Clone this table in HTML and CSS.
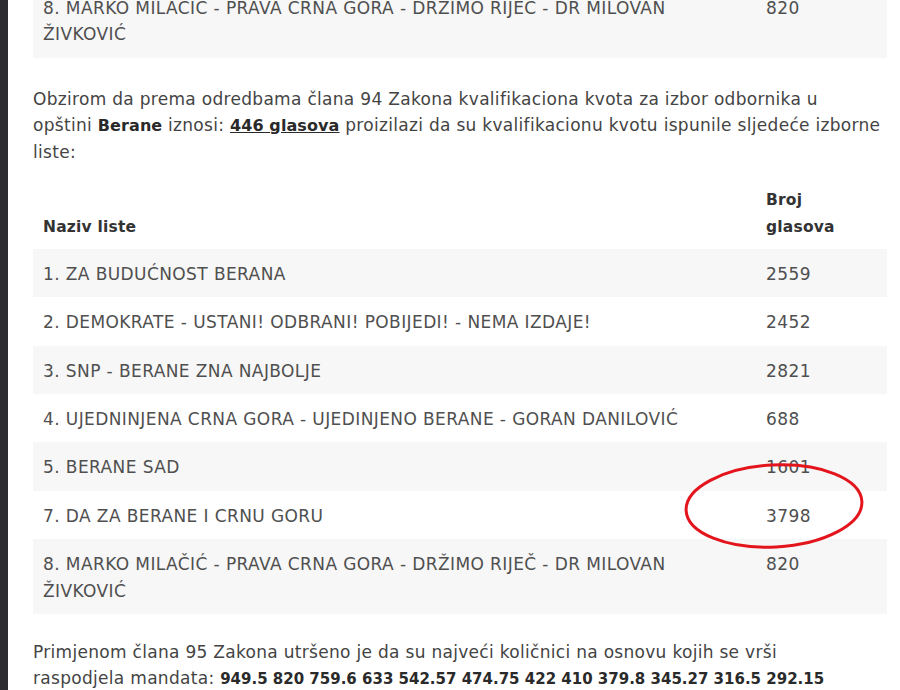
FILE: index.html
```html
<!DOCTYPE html>
<html lang="sr">
<head>
<meta charset="utf-8">
<title>Berane</title>
<link rel="stylesheet" href="styles.css">
</head>
<body>
<div class="page">
  <div class="sidebar"></div>
  <main class="content">
    <table class="results results-top">
      <colgroup><col class="col-name"><col class="col-votes"></colgroup>
      <tbody>
        <tr class="striped"><td>8. MARKO MILAČIĆ - PRAVA CRNA GORA - DRŽIMO RIJEČ - DR MILOVAN ŽIVKOVIĆ</td><td>820</td></tr>
      </tbody>
    </table>

    <p class="para">Obzirom da prema odredbama člana 94 Zakona kvalifikaciona kvota za izbor odbornika u opštini&nbsp;<strong>Berane</strong> iznosi: <strong class="under">446 glasova</strong> proizilazi da su kvalifikacionu kvotu ispunile sljedeće izborne liste:</p>

    <div class="table-wrap">
      <table class="results">
        <colgroup><col class="col-name"><col class="col-votes"></colgroup>
        <thead>
          <tr><th>Naziv liste</th><th>Broj<br>glasova</th></tr>
        </thead>
        <tbody>
          <tr class="striped"><td>1. ZA BUDUĆNOST BERANA</td><td>2559</td></tr>
          <tr><td>2. DEMOKRATE - USTANI! ODBRANI! POBIJEDI! - NEMA IZDAJE!</td><td>2452</td></tr>
          <tr class="striped"><td>3. SNP - BERANE ZNA NAJBOLJE</td><td>2821</td></tr>
          <tr><td>4. UJEDNINJENA CRNA GORA - UJEDINJENO BERANE - GORAN DANILOVIĆ</td><td>688</td></tr>
          <tr class="striped"><td>5. BERANE SAD</td><td>1601</td></tr>
          <tr><td>7. DA ZA BERANE I CRNU GORU</td><td>3798</td></tr>
          <tr class="striped"><td>8. MARKO MILAČIĆ - PRAVA CRNA GORA - DRŽIMO RIJEČ - DR MILOVAN ŽIVKOVIĆ</td><td>820</td></tr>
        </tbody>
      </table>
      <svg class="circle" width="190" height="100" viewBox="0 0 190 100" aria-hidden="true">
        <ellipse cx="95" cy="50" rx="88" ry="41" transform="rotate(-3 95 50)" fill="none" stroke="#e3141c" stroke-width="3"/>
      </svg>
    </div>

    <p class="para para-bottom">Primjenom člana 95 Zakona utršeno je da su najveći količnici na osnovu kojih se vrši raspodjela&nbsp;mandata: <strong class="nums">949.5 820 759.6 633 542.57 474.75 422 410 379.8 345.27 316.5 292.15</strong></p>
  </main>
</div>
</body>
</html>
```

FILE: styles.css
```css
* { box-sizing: border-box; }

html, body {
  margin: 0;
  padding: 0;
  background: #ffffff;
  height: 100%;
  overflow: hidden;
}

body {
  font-family: "DejaVu Sans", "Noto Sans", sans-serif;
  font-size: 17px;
  letter-spacing: 0.4px;
  color: #444444;
}

.page {
  display: flex;
  height: 690px;
}

.sidebar {
  width: 8px;
  flex: 0 0 8px;
  background: #2b2b30;
}

.content {
  flex: 0 0 854px;
  margin-left: 25px;
}

.results {
  width: 854px;
  border-collapse: collapse;
  table-layout: fixed;
}

.results-top {
  margin-top: -17px;
}

.col-name { width: 723px; }
.col-votes { width: 131px; }

.results td,
.results th {
  text-align: left;
  vertical-align: top;
  padding: 12px 10px 10px;
  line-height: 26.4px;
  color: #4f4f4f;
  font-weight: normal;
}

.results th {
  font-weight: bold;
  color: #333333;
  vertical-align: bottom;
  line-height: 27px;
  padding: 11px 10px 8px;
  font-size: 15.5px;
  letter-spacing: 0.2px;
}

.results tr.striped td {
  background: #f7f7f7;
}

.para {
  margin: 28px 0 11px;
  line-height: 26px;
  color: #444444;
  letter-spacing: 0.3px;
}

.para strong {
  color: #2a2a2a;
  font-weight: bold;
  font-size: 16px;
  letter-spacing: 0.1px;
}

.para .under {
  text-decoration: underline;
}

.para .nums {
  font-size: 15px;
  letter-spacing: 0;
}

.para-bottom {
  margin-top: 25px;
}

.table-wrap {
  position: relative;
}

.circle {
  position: absolute;
  left: 646px;
  top: 280px;
}
```
